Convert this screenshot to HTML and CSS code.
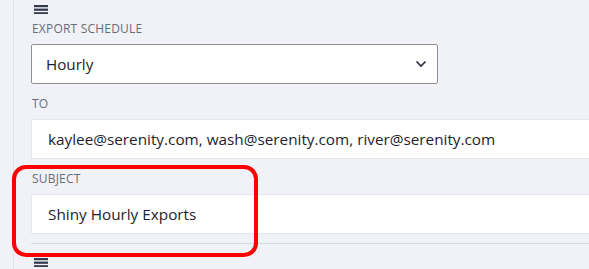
FILE: index.html
```html
<!DOCTYPE html>
<html>
<head>
<meta charset="utf-8">
<link rel="stylesheet" href="styles.css">
</head>
<body>
<div class="page">
  <div class="panel">
    <div class="handle">
      <svg width="14" height="10" viewBox="0 0 14 10"><rect x="0" y="1" width="14" height="2.2" /><rect x="0" y="4.6" width="14" height="2.2"/><rect x="0" y="8.2" width="14" height="2.2"/></svg>
    </div>
    <div class="field">
      <div class="label">EXPORT SCHEDULE</div>
      <div class="select">
        <span>Hourly</span>
        <svg class="chev" width="12" height="8" viewBox="0 0 12 8"><path d="M1.5 1.5 L6 6 L10.5 1.5" fill="none" stroke="#2b2f3a" stroke-width="1.7"/></svg>
      </div>
    </div>
    <div class="field">
      <div class="label">TO</div>
      <div class="input">kaylee@serenity.com, wash@serenity.com, river@serenity.com</div>
    </div>
    <div class="field last">
      <div class="label">SUBJECT</div>
      <div class="input">Shiny Hourly Exports</div>
    </div>
    <div class="divider"></div>
    <div class="handle bottom">
      <svg width="14" height="10" viewBox="0 0 14 10"><rect x="0" y="1" width="14" height="2.2" /><rect x="0" y="4.6" width="14" height="2.2"/><rect x="0" y="8.2" width="14" height="2.2"/></svg>
    </div>
  </div>
  <div class="highlight"></div>
</div>
</body>
</html>
```
FILE: styles.css
```css
html, body {
  margin: 0;
  padding: 0;
  background: #f1f2f7;
  overflow: hidden;
  width: 589px;
  height: 269px;
}
.page {
  position: relative;
  width: 589px;
  height: 269px;
  overflow: hidden;
  font-family: "Open Sans", "Noto Sans", sans-serif;
}
.panel {
  margin-left: 13px;
  border-left: 1px solid #e1e2e7;
  padding-left: 17px;
  width: 700px;
  height: 269px;
  box-sizing: border-box;
  padding-top: 4px;
}
.handle {
  height: 10px;
  padding-left: 3px;
  margin-bottom: 7px;
}
.handle svg { display: block; fill: #333a4e; }
.field {
  margin-bottom: 12px;
}
.field.last { margin-bottom: 9px; }
.label {
  height: 16px;
  line-height: 16px;
  font-size: 12px;
  color: #676c7b;
  letter-spacing: 0.2px;
  margin-bottom: 7px;
  padding-left: 1px;
}
.select {
  width: 407px;
  height: 40px;
  box-sizing: border-box;
  border: 1px solid #8e8f94;
  border-radius: 2px;
  background: #fff;
  display: flex;
  align-items: center;
  justify-content: space-between;
  padding: 0 10px 0 14px;
  font-size: 15.2px;
  color: #1e2230;
}
.chev { display: block; }
.input {
  height: 40px;
  box-sizing: border-box;
  border: 1px solid #e5e6eb;
  background: #fff;
  display: flex;
  align-items: center;
  padding-left: 16px;
  font-size: 15.3px;
  color: #1e2230;
}
.divider {
  height: 1px;
  background: #d9dadf;
  margin-bottom: 13px;
}
.highlight {
  position: absolute;
  left: 12px;
  top: 165px;
  width: 246px;
  height: 92px;
  box-sizing: border-box;
  border: 4px solid #ff0000;
  border-radius: 14px;
}
```
